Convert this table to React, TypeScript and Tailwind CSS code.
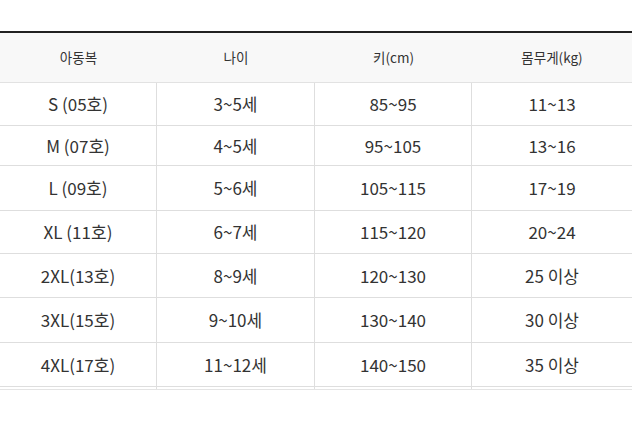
import React from "react";

const rows: { h: string; c: string[] }[] = [
  { h: "h-[43px]", c: ["S (05호)", "3~5세", "85~95", "11~13"] },
  { h: "h-[40px]", c: ["M (07호)", "4~5세", "95~105", "13~16"] },
  { h: "h-[45px]", c: ["L (09호)", "5~6세", "105~115", "17~19"] },
  { h: "h-[43px]", c: ["XL (11호)", "6~7세", "115~120", "20~24"] },
  { h: "h-[44px]", c: ["2XL(13호)", "8~9세", "120~130", "25 이상"] },
  { h: "h-[45px]", c: ["3XL(15호)", "9~10세", "130~140", "30 이상"] },
  { h: "h-[44px]", c: ["4XL(17호)", "11~12세", "140~150", "35 이상"] },
];

const widths = ["w-[157px]", "w-[158px]", "w-[157px]", "w-[160px]"];

export default function App() {
  return (
    <div
      className="w-[639px] h-[437px] bg-white"
      style={{ fontFamily: '"Noto Sans CJK KR", "Noto Sans", sans-serif' }}
    >
      <div className="h-[31px]" />
      <div className="w-[632px] border-t-2 border-[#222]">
        <div className="flex h-[50px] bg-[#f8f8f8] border-b border-[#e2e2e2] text-[13.5px] text-[#333]">
          {["아동복", "나이", "키(cm)", "몸무게(kg)"].map((t, i) => (
            <div key={i} className={`${widths[i]} flex items-center justify-center`}>
              {t}
            </div>
          ))}
        </div>
        {rows.map((r, ri) => (
          <div key={ri} className={`flex ${r.h} border-b border-[#dedede] text-[17px] text-[#333]`}>
            {r.c.map((t, i) => (
              <div
                key={i}
                className={`${widths[i]} flex items-center justify-center ${i < 3 ? "border-r border-[#dedede]" : ""}`}
              >
                {t}
              </div>
            ))}
          </div>
        ))}
        <div className="flex h-[3px] border-b border-[#e4e4e4]">
          {widths.map((w, i) => (
            <div key={i} className={`${w} ${i < 3 ? "border-r border-[#dedede]" : ""}`} />
          ))}
        </div>
      </div>
    </div>
  );
}
